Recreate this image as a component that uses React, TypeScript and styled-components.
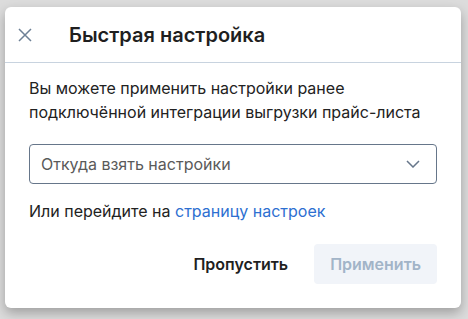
import React from "react";
import styled, { createGlobalStyle } from "styled-components";

const GlobalStyle = createGlobalStyle`
  html, body {
    margin: 0;
    padding: 0;
    background: #dcdcdc;
    font-family: Inter, "Noto Sans", sans-serif;
  }
  * { box-sizing: border-box; }
`;

const Page = styled.div`
  width: 468px;
  height: 319px;
  padding: 7px 0 0 5px;
`;

const Dialog = styled.div`
  width: 456px;
  background: #fff;
  border-radius: 6px;
  box-shadow: 0 5px 12px rgba(0, 0, 0, 0.28);
`;

const Header = styled.div`
  height: 56px;
  display: flex;
  align-items: center;
  padding-left: 13px;
  border-bottom: 1px solid #c8d3df;
`;

const CloseButton = styled.button`
  width: 14px;
  height: 14px;
  padding: 0;
  border: 0;
  background: none;
  display: flex;
  cursor: pointer;
  margin-right: 37px;
`;

const Title = styled.h2`
  margin: 0;
  font-size: 20px;
  font-weight: 600;
  color: #1f1f1f;
`;

const Body = styled.div`
  padding: 13px 24px 24px 24px;
`;

const Text = styled.p`
  margin: 0;
  font-size: 16px;
  line-height: 24px;
  color: #222;
`;

const Select = styled.div`
  margin: 20px 0 15px;
  height: 40px;
  border: 1px solid #66768a;
  border-radius: 4px;
  display: flex;
  align-items: center;
  justify-content: space-between;
  padding: 0 16px 0 11px;
  font-size: 16px;
  color: #5a5a5a;
  cursor: pointer;
`;

const Link = styled.a`
  color: #2d6fd1;
  text-decoration: none;
`;

const Actions = styled.div`
  margin-top: 21px;
  display: flex;
  justify-content: flex-end;
  gap: 10px;
`;

const Button = styled.button<{ $disabled?: boolean }>`
  height: 40px;
  padding: 0 16px;
  border: 0;
  border-radius: 4px;
  font-family: inherit;
  font-size: 16px;
  font-weight: 600;
  background: ${(p) => (p.$disabled ? "#f1f4f9" : "transparent")};
  color: ${(p) => (p.$disabled ? "#a2b4c8" : "#1f1f1f")};
  cursor: ${(p) => (p.$disabled ? "default" : "pointer")};
`;

export default function App() {
  return (
    <>
      <GlobalStyle />
      <Page>
        <Dialog>
          <Header>
            <CloseButton aria-label="Закрыть">
              <svg width="14" height="14" viewBox="0 0 14 14">
                <path d="M1 1L13 13M13 1L1 13" stroke="#6d8096" strokeWidth="1.5" />
              </svg>
            </CloseButton>
            <Title>Быстрая настройка</Title>
          </Header>
          <Body>
            <Text>
              Вы можете применить настройки ранее подключённой интеграции
              выгрузки прайс-листа
            </Text>
            <Select>
              <span>Откуда взять настройки</span>
              <svg width="14" height="8" viewBox="0 0 14 8">
                <path d="M1 1L7 7L13 1" fill="none" stroke="#66768a" strokeWidth="1.5" />
              </svg>
            </Select>
            <Text>
              Или перейдите на <Link href="#">страницу настроек</Link>
            </Text>
            <Actions>
              <Button>Пропустить</Button>
              <Button $disabled disabled>
                Применить
              </Button>
            </Actions>
          </Body>
        </Dialog>
      </Page>
    </>
  );
}
